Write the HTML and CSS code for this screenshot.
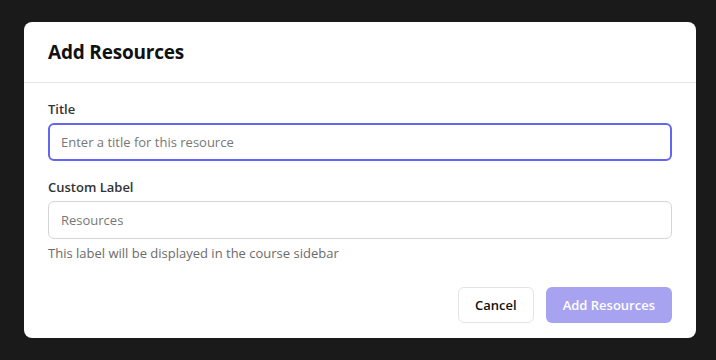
FILE: index.html
```html
<!DOCTYPE html>
<html lang="en">
<head>
  <meta charset="UTF-8">
  <meta name="viewport" content="width=device-width, initial-scale=1.0">
  <title>Add Resources</title>
  <link rel="stylesheet" href="styles.css">
</head>
<body>
  <!-- modal dialog -->
  <div class="modal">
    <div class="modal-header">
      <h2>Add Resources</h2>
    </div>

    <div class="modal-body">
      <label class="field">
        <span class="field-label">Title</span>
        <input type="text" class="input input-focus" placeholder="Enter a title for this resource" autofocus>
      </label>

      <label class="field">
        <span class="field-label">Custom Label</span>
        <input type="text" class="input" placeholder="Resources">
        <span class="field-help">This label will be displayed in the course sidebar</span>
      </label>
    </div>

    <div class="modal-footer">
      <button class="btn btn-cancel">Cancel</button>
      <button class="btn btn-primary" disabled>Add Resources</button>
    </div>
  </div>
</body>
</html>
```

FILE: styles.css
```css
html, body {
  height: 100%;
}
body {
  margin: 0;
  padding-left: 4px; /* dialog sits slightly right of centre */
  box-sizing: border-box;
  background: #1a1a1a;
  font-family: "Open Sans", "Noto Sans", sans-serif;
  display: flex;
  align-items: center;
  justify-content: center;
}
.modal {
  width: 672px;
  background: #fff;
  border-radius: 8px;
  overflow: hidden;
}
.modal-header {
  padding: 16px 24px;
  border-bottom: 1px solid #e5e5e5;
}
.modal-header h2 {
  margin: 0;
  font-size: 19px;
  line-height: 28px;
  font-weight: 700;
  color: #111;
  letter-spacing: -0.2px;
}
.modal-body {
  padding: 16px 24px 0;
  display: flex;
  flex-direction: column;
  gap: 16px;
}
.field {
  display: flex;
  flex-direction: column;
}
.field-label {
  font-size: 13px;
  line-height: 20px;
  font-weight: 600;
  color: #333;
  margin-bottom: 4px;
}
.input {
  height: 38px;
  box-sizing: border-box;
  border: 1px solid #d4d4d8;
  border-radius: 6px;
  padding: 0 12px;
  font-family: inherit;
  font-size: 13px;
  color: #111;
  outline: none;
}
.input::placeholder {
  color: #777;
}
.input-focus {
  border: 2px solid #6366f1;
  padding: 0 11px;
  caret-color: #111;
}
.field-help {
  margin-top: 5px;
  font-size: 13px;
  line-height: 18px;
  color: #6b6b6b;
}
.modal-footer {
  display: flex;
  justify-content: flex-end;
  gap: 12px;
  padding: 25px 24px 15px;
}
.btn {
  height: 36px;
  border-radius: 6px;
  padding: 0 16px;
  font-family: inherit;
  font-size: 13px;
  font-weight: 600;
  cursor: pointer;
}
.btn-cancel {
  background: #fff;
  border: 1px solid #e2e4ea;
  color: #111;
}
.btn-primary {
  padding: 0 17px;
  background: #a8a3f1;
  border: none;
  color: #fff;
}
```
